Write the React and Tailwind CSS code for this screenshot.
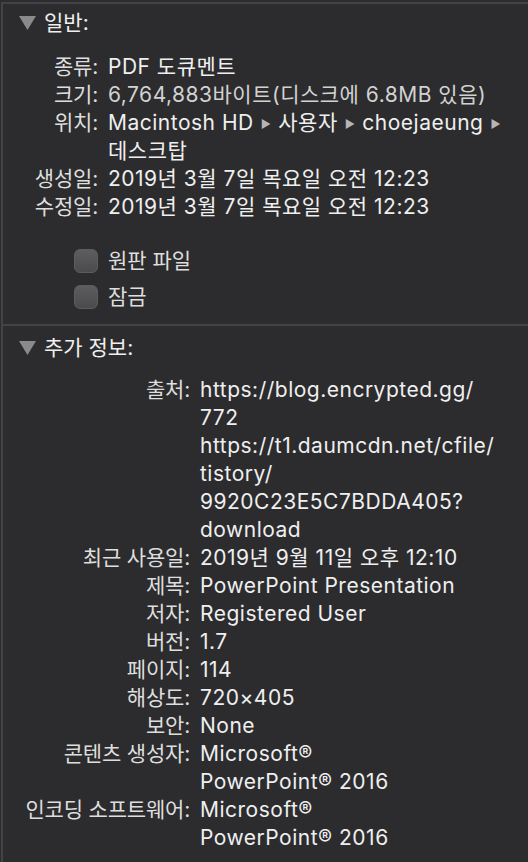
import React from "react";

const font = {
  fontFamily: 'Inter, "Noto Sans CJK KR", sans-serif',
};

function Triangle() {
  return (
    <svg width="17" height="14" viewBox="0 0 17 14" className="shrink-0">
      <path d="M0 0 H17 L8.5 14 Z" fill="#8a8a8a" />
    </svg>
  );
}

function Sep() {
  return <span className="mx-[7px] text-[11px] text-[#b5b5b5] align-[2px]">▶</span>;
}

function Row({ label, lines, labelW, valueClass = "text-[#efefef]" }) {
  return (
    <div className="flex">
      <div className="shrink-0 text-right text-[#dedede] tracking-[-0.2px]" style={{ width: labelW }}>
        {label}:
      </div>
      <div className={`pl-[10px] tracking-[0.5px] ${valueClass}`}>
        {lines.map((l, i) => (
          <div key={i} className="h-[28px] leading-[28px] whitespace-nowrap">
            {l}
          </div>
        ))}
      </div>
    </div>
  );
}

function Checkbox({ label }) {
  return (
    <div className="flex items-center h-[36px] pl-[71px] gap-[10px]">
      <div className="w-[24px] h-[24px] rounded-[6px] bg-gradient-to-b from-[#5d5d5f] to-[#4b4b4d] border border-[#5c5c5e]" />
      <span className="text-[#dedede]">{label}</span>
    </div>
  );
}

export default function App() {
  const general = [
    ["종류", ["PDF 도큐멘트"]],
    ["크기", ["6,764,883바이트(디스크에 6.8MB 있음)"], "text-[#d2d2d2]"],
    [
      "위치",
      [
        <>
          Macintosh HD<Sep />사용자<Sep />choejaeung<Sep />
        </>,
        "데스크탑",
      ],
    ],
    ["생성일", ["2019년 3월 7일 목요일 오전 12:23"]],
    ["수정일", ["2019년 3월 7일 목요일 오전 12:23"]],
  ];

  const more = [
    [
      "출처",
      [
        "https://blog.encrypted.gg/",
        "772",
        "https://t1.daumcdn.net/cfile/",
        "tistory/",
        "9920C23E5C7BDDA405?",
        "download",
      ],
    ],
    ["최근 사용일", ["2019년 9월 11일 오후 12:10"]],
    ["제목", ["PowerPoint Presentation"]],
    ["저자", ["Registered User"]],
    ["버전", ["1.7"]],
    ["페이지", ["114"]],
    ["해상도", ["720×405"]],
    ["보안", ["None"]],
    ["콘텐츠 생성자", ["Microsoft®", "PowerPoint® 2016"]],
    ["인코딩 소프트웨어", ["Microsoft®", "PowerPoint® 2016"]],
  ];

  return (
    <div
      className="w-[528px] h-[862px] overflow-hidden bg-[#2c2c2e] pl-[1px] pt-[2px] text-[21px] leading-[28px]"
      style={font}
    >
      <div className="h-full border-l-2 border-t-2 border-[#434345]">
        <section className="h-[320px]">
          <div className="flex items-center gap-[8px] pl-[16px] pt-[5px] h-[33px] text-[#efefef]">
            <Triangle />
            <span>일반:</span>
          </div>
          <div className="mt-[16px]">
            {general.map(([l, v, c]) => (
              <Row key={l} label={l} lines={v} labelW={95} valueClass={c} />
            ))}
          </div>
          <div className="mt-[22px]">
            <Checkbox label="원판 파일" />
            <Checkbox label="잠금" />
          </div>
        </section>
        <div className="h-[2px] bg-[#434345]" />
        <section>
          <div className="flex items-center gap-[8px] pl-[16px] pt-[8px] h-[36px] text-[#efefef]">
            <Triangle />
            <span>추가 정보:</span>
          </div>
          <div className="mt-[14px]">
            {more.map(([l, v]) => (
              <Row key={l} label={l} lines={v} labelW={187} />
            ))}
          </div>
        </section>
      </div>
    </div>
  );
}
